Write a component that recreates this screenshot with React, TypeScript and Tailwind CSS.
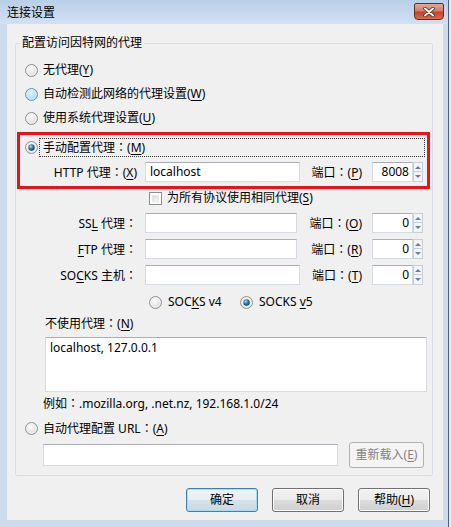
import type { ReactNode } from "react"

type RadioState = "off" | "hover" | "on"

function Radio({ state = "off" }: { state?: RadioState }) {
  const id = `rg-${state}`
  return (
    <svg width="13" height="13" viewBox="0 0 13 13" className="shrink-0">
      <defs>
        <radialGradient id={id} cx="45%" cy="40%" r="60%">
          {state === "hover" ? (
            <>
              <stop offset="0%" stopColor="#e8f6fd" />
              <stop offset="100%" stopColor="#9fd0ec" />
            </>
          ) : (
            <>
              <stop offset="0%" stopColor="#ffffff" />
              <stop offset="100%" stopColor="#d4d4d4" />
            </>
          )}
        </radialGradient>
        <radialGradient id={`${id}-dot`} cx="40%" cy="35%" r="65%">
          <stop offset="0%" stopColor="#b9e1f5" />
          <stop offset="45%" stopColor="#3a86b8" />
          <stop offset="100%" stopColor="#173d5c" />
        </radialGradient>
      </defs>
      <circle cx="6.5" cy="6.5" r="6" fill={`url(#${id})`} stroke={state === "hover" ? "#5a9bc6" : "#929292"} />
      <circle cx="6.5" cy="6.5" r="4.6" fill="none" stroke={state === "hover" ? "#d6eefa" : "#f6f6f6"} />
      {state === "on" && <circle cx="6.5" cy="6.5" r="3.2" fill={`url(#${id}-dot)`} />}
    </svg>
  )
}

function Checkbox() {
  return (
    <div className="w-[13px] h-[13px] shrink-0 border border-[#8f8f8f] bg-white p-[2px]">
      <div className="w-full h-full bg-gradient-to-br from-[#d9d9d9] to-[#f8f8f8] border border-[#e6e6e6]" />
    </div>
  )
}

function U({ children }: { children: ReactNode }) {
  return <span className="underline underline-offset-[2px]">{children}</span>
}

// full-width colon, centred like the Windows UI font draws it
function C() {
  return <span className="font-['Noto_Sans_CJK_TC',sans-serif]">：</span>
}

function TextBox({ className, value = "", right = false }: { className: string; value?: string; right?: boolean }) {
  return (
    <div
      className={`h-[20px] shrink-0 bg-white border border-[#d6dbe3] border-t-[#abadb3] flex items-center ${
        right ? "justify-end pr-[3px]" : "pl-[4px]"
      } ${className}`}
    >
      {value}
    </div>
  )
}

function Spinner() {
  return (
    <div className="w-[10px] h-[20px] shrink-0 flex flex-col">
      <div className="h-[10px] border border-[#c9ced6] bg-[#f2f4f7] flex items-center justify-center">
        <div className="w-0 h-0 border-l-[3px] border-r-[3px] border-b-[3px] border-l-transparent border-r-transparent border-b-[#6a7d9c]" />
      </div>
      <div className="h-[10px] border border-t-0 border-[#c9ced6] bg-[#f2f4f7] flex items-center justify-center">
        <div className="w-0 h-0 border-l-[3px] border-r-[3px] border-t-[3px] border-l-transparent border-r-transparent border-t-[#6a7d9c]" />
      </div>
    </div>
  )
}

function ProxyRow({
  label,
  labelW,
  inputW,
  midW,
  value,
  port,
  portLabel,
}: {
  label: ReactNode
  labelW: string
  inputW: string
  midW: string
  value?: string
  port: string
  portLabel: ReactNode
}) {
  return (
    <div className="h-[20px] flex items-center">
      <div className={`${labelW} shrink-0 text-right`}>{label}</div>
      <TextBox className={`ml-[8px] ${inputW}`} value={value} />
      <div className={`${midW} shrink-0 text-right pr-[10px]`}>{portLabel}</div>
      <TextBox className="w-[41px]" value={port} right />
      <Spinner />
    </div>
  )
}

function Button({ children, primary = false, disabled = false, className = "" }: { children: ReactNode; primary?: boolean; disabled?: boolean; className?: string }) {
  if (disabled) {
    return (
      <div className={`h-[26px] rounded-[3px] border border-[#adb2b5] bg-[#f4f4f4] text-[#838383] flex items-center justify-center ${className}`}>
        {children}
      </div>
    )
  }
  return (
    <div
      className={`h-[24px] w-[72px] rounded-[3px] border flex items-center justify-center ${
        primary
          ? "border-[#3c7fb1] shadow-[inset_0_0_0_1px_#a8dcf3] bg-[linear-gradient(#eef4f8_0%,#e6eef4_50%,#d6e2ea_50%,#c9d8e2_100%)]"
          : "border-[#707070] shadow-[inset_0_0_0_1px_#fcfcfc] bg-[linear-gradient(#f2f2f2_0%,#ebebeb_50%,#dddddd_50%,#cfcfcf_100%)]"
      } ${className}`}
    >
      {children}
    </div>
  )
}

export default function App() {
  return (
    <div className="w-[451px] h-[527px] bg-[#e4ebf3] font-['Noto_Sans','Noto_Sans_CJK_SC',sans-serif] text-[12px] leading-[16px] text-black">
      <div className="w-[449px] h-[527px] border-r border-[#4a5d7c] bg-[#cddbec] flex flex-col">
        {/* title bar */}
        <div className="h-[24px] shrink-0 flex items-start bg-gradient-to-b from-[#b9cfe8] to-[#d2e1f2]">
          <div className="pl-[7px] pt-[5px]">连接设置</div>
          <div className="ml-auto mr-[4px] mt-[3px] w-[30px] h-[17px] rounded-b-[4px] rounded-t-[2px] border border-[#6e2a22] bg-[linear-gradient(#e8a695_0%,#d47f6a_45%,#c2442e_55%,#d56d4d_100%)] flex items-center justify-center">
            <svg width="12" height="10" viewBox="0 0 12 10">
              <path d="M2 1.5 L10 8.5 M10 1.5 L2 8.5" stroke="#4b1a12" strokeWidth="3.4" strokeLinecap="round" />
              <path d="M2 1.5 L10 8.5 M10 1.5 L2 8.5" stroke="#ffffff" strokeWidth="2" strokeLinecap="round" />
            </svg>
          </div>
        </div>

        {/* client area */}
        <div className="ml-[7px] w-[436px] h-[496px] bg-[#f0f0f0] flex flex-col">
          <fieldset className="mt-[11px] ml-[8px] mr-[10px] border border-[#d5dfe5] rounded-[2px]">
            <legend className="ml-[4px] px-[2px] leading-[16px]">配置访问因特网的代理</legend>
            <div className="flex flex-col">
              <div className="mt-[7px] h-[24px] flex items-center pl-[9px] gap-[5px]">
                <Radio />
                <span>无代理(<U>Y</U>)</span>
              </div>
              <div className="h-[24px] flex items-center pl-[9px] gap-[5px]">
                <Radio state="hover" />
                <span>自动检测此网络的代理设置(<U>W</U>)</span>
              </div>
              <div className="h-[24px] flex items-center pl-[9px] gap-[5px]">
                <Radio />
                <span>使用系统代理设置(<U>U</U>)</span>
              </div>

              {/* manual proxy, highlighted */}
              <div className="mt-[2px] ml-[1px] mr-[2px] border-[3px] border-[#e5141c] pt-[3px] pb-[4px]">
                <div className="h-[19px] flex items-center pl-[5px]">
                  <Radio state="on" />
                  <div className="ml-[1px] mr-[2px] flex-1 h-[19px] border border-dotted border-[#333] pl-[3px] flex items-center">
                    <span>手动配置代理<C />(<U>M</U>)</span>
                  </div>
                </div>
                <div className="mt-[5px]">
                  <ProxyRow
                    label={<>HTTP 代理<C />(<U>X</U>)</>}
                    labelW="w-[117px]"
                    inputW="w-[155px]"
                    midW="w-[72px]"
                    value="localhost"
                    port="8008"
                    portLabel={<>端口<C />(<U>P</U>)</>}
                  />
                </div>
              </div>

              <div className="mt-[1px] h-[16px] flex items-center pl-[133px] gap-[5px]">
                <Checkbox />
                <span>为所有协议使用相同代理(<U>S</U>)</span>
              </div>

              <div className="mt-[7px]">
                <ProxyRow
                  label={<>SS<U>L</U> 代理<C /></>}
                  labelW="w-[121px]"
                  inputW="w-[152px]"
                  midW="w-[75px]"
                  port="0"
                  portLabel={<>端口<C />(<U>O</U>)</>}
                />
              </div>
              <div className="mt-[6px]">
                <ProxyRow
                  label={<><U>F</U>TP 代理<C /></>}
                  labelW="w-[121px]"
                  inputW="w-[152px]"
                  midW="w-[75px]"
                  port="0"
                  portLabel={<>端口<C />(<U>R</U>)</>}
                />
              </div>
              <div className="mt-[6px]">
                <ProxyRow
                  label={<>SO<U>C</U>KS 主机<C /></>}
                  labelW="w-[121px]"
                  inputW="w-[155px]"
                  midW="w-[72px]"
                  port="0"
                  portLabel={<>端口<C />(<U>T</U>)</>}
                />
              </div>

              <div className="mt-[7px] h-[20px] flex items-center pl-[133px]">
                <div className="w-[91px] flex items-center gap-[6px]">
                  <Radio />
                  <span>SOC<U>K</U>S v4</span>
                </div>
                <div className="flex items-center gap-[6px]">
                  <Radio state="on" />
                  <span>SOCKS <U>v</U>5</span>
                </div>
              </div>

              <div className="mt-[3px] h-[16px] pl-[29px]">不使用代理<C />(<U>N</U>)</div>
              <div className="mt-[6px] ml-[29px] w-[382px] h-[55px] bg-white border border-[#d6dbe3] border-t-[#abadb3] pl-[4px] pt-[2px]">
                localhost, 127.0.0.1
              </div>
              <div className="mt-[3px] h-[16px] pl-[27px]">例如<C />.mozilla.org, .net.nz, 192.168.1.0/24</div>

              <div className="mt-[5px] h-[24px] flex items-center pl-[9px] gap-[5px]">
                <Radio />
                <span>自动代理配置 URL<C />(<U>A</U>)</span>
              </div>
              <div className="mt-[2px] mb-[7px] h-[26px] flex items-center pl-[27px]">
                <div className="w-[295px] h-[22px] bg-white border border-[#d6dbe3] border-t-[#abadb3]" />
                <Button disabled className="ml-[11px] w-[75px]">
                  <span>重新载入(<U>E</U>)</span>
                </Button>
              </div>
            </div>
          </fieldset>

          <div className="mt-[12px] pr-[13px] flex justify-end gap-[14px]">
            <Button primary>确定</Button>
            <Button>取消</Button>
            <Button>
              <span>帮助(<U>H</U>)</span>
            </Button>
          </div>
        </div>
      </div>
    </div>
  )
}
